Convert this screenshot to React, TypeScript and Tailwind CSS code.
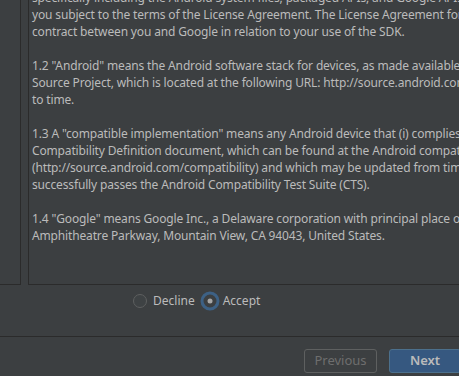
import React from "react";

const lines = [
  "specifically including the Android system files, packaged APIs, and Google APIs add-ons.",
  "you subject to the terms of the License Agreement. The License Agreement forms a legally binding",
  "contract between you and Google in relation to your use of the SDK.",
  "",
  '1.2 "Android" means the Android software stack for devices, as made available under the Android Open',
  "Source Project, which is located at the following URL: http://source.android.com/, as updated from time",
  "to time.",
  "",
  '1.3 A "compatible implementation" means any Android device that (i) complies with the Android',
  "Compatibility Definition document, which can be found at the Android compatibility website",
  "(http://source.android.com/compatibility) and which may be updated from time to time; and (ii)",
  "successfully passes the Android Compatibility Test Suite (CTS).",
  "",
  '1.4 "Google" means Google Inc., a Delaware corporation with principal place of business at 1600',
  "Amphitheatre Parkway, Mountain View, CA 94043, United States.",
];

const App: React.FC = () => {
  return (
    <div
      className="w-[459px] h-[376px] bg-[#3c3f41] text-[#bbbbbb] flex flex-col overflow-hidden"
      style={{ fontFamily: '"Noto Sans", "Open Sans", sans-serif' }}
    >
      {/* License panels */}
      <div className="flex h-[285px] gap-[7px]">
        <div className="w-[21px] shrink-0 border-r border-b border-[#2b2b2b]" />
        <div className="flex-1 border-l border-b border-[#2b2b2b] overflow-hidden pl-[3px]">
          <div className="-mt-[11px] text-[12px] leading-[17px] tracking-[-0.15px]">
            {lines.map((l, i) => (
              <div key={i} className="whitespace-nowrap h-[17px]">
                {l}
              </div>
            ))}
          </div>
        </div>
      </div>

      {/* Decline / Accept */}
      <div className="h-[52px] border-b border-[#2b2b2b] flex items-start pt-[7px] pl-[132px] text-[12px]">
        <label className="flex items-center h-[18px]">
          <svg width="16" height="16" viewBox="0 0 16 16">
            <circle cx="8" cy="8" r="6.5" fill="#3e4244" stroke="#5e6060" strokeWidth="1" />
          </svg>
          <span className="ml-[5px]">Decline</span>
        </label>
        <label className="flex items-center h-[18px] ml-[5px]">
          <svg width="20" height="20" viewBox="0 0 20 20">
            <circle cx="10" cy="10" r="8" fill="#3c3f41" stroke="#3d6185" strokeWidth="3" />
            <circle cx="10" cy="10" r="2.5" fill="#a7a7a7" />
          </svg>
          <span className="ml-[3px]">Accept</span>
        </label>
      </div>

      {/* Buttons */}
      <div className="flex items-start pt-[12px] pl-[304px] text-[13px]">
        <button className="shrink-0 w-[73px] h-[24px] rounded-[3px] border border-[#5e6060] text-[#6e6e6e] bg-[#3c3f41]">
          Previous
        </button>
        <button className="shrink-0 ml-[12px] w-[72px] h-[24px] rounded-[3px] border border-[#4c708c] bg-[#365880] text-[#bbbbbb] font-semibold">
          Next
        </button>
      </div>
    </div>
  );
};

export default App;
